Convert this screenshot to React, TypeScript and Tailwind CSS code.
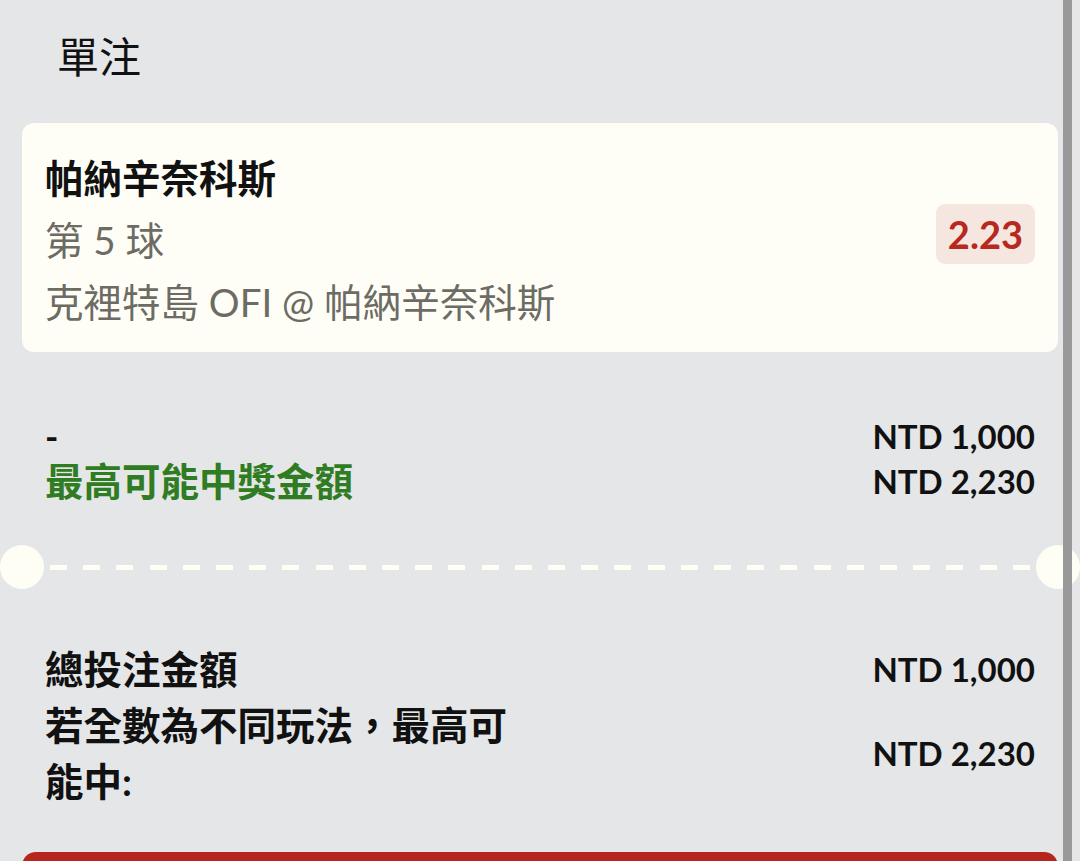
const font = "font-['Lato','Noto_Sans_CJK_TC',sans-serif]";

function Dashes() {
  const dashes = Array.from({ length: 30 }, (_, i) => i);
  return (
    <div className="flex h-[44px] w-full items-center">
      <div className="h-[44px] w-[44px] shrink-0 rounded-full bg-[#fffef5]" />
      <div className="flex flex-1 items-center justify-between px-[6px]">
        {dashes.map((i) => (
          <div key={i} className="h-[5px] w-[17px] bg-[#fffef5]" />
        ))}
      </div>
      <div className="h-[44px] w-[44px] shrink-0 rounded-full bg-[#fffef5]" />
    </div>
  );
}

export default function App() {
  return (
    <div className={`relative h-[861px] w-[1080px] overflow-hidden bg-[#e5e6e8] text-[#111] ${font}`}>
      {/* Header */}
      <div className="h-[123px] pl-[57px] pt-[27px] text-[42px] leading-[60px]">單注</div>

      {/* Selection card */}
      <div className="mx-[22px] flex items-center justify-between rounded-[12px] bg-[#fffef6] pb-[19px] pl-[23px] pr-[23px] pt-[24px]">
        <div className="text-[38.5px] leading-[62px]">
          <div className="font-bold text-[#111]">帕納辛奈科斯</div>
          <div className="text-[#6c6b64]">第 5 球</div>
          <div className="text-[#6c6b64]">克裡特島 OFI @ 帕納辛奈科斯</div>
        </div>
        <div className="mb-[12px] rounded-[9px] bg-[#f6e6e0] px-[12px] text-[38px] font-bold leading-[60px] text-[#b8281f]">
          2.23
        </div>
      </div>

      {/* Stake / potential win */}
      <div className="mx-[22px] mt-[62px] px-[23px] font-bold leading-[45px]">
        <div className="flex items-center justify-between">
          <span className="text-[36px]">-</span>
          <span className="text-[33px]">NTD 1,000</span>
        </div>
        <div className="flex items-center justify-between">
          <span className="text-[38.5px] text-[#2f7c22]">最高可能中獎金額</span>
          <span className="text-[33px]">NTD 2,230</span>
        </div>
      </div>

      {/* Ticket separator */}
      <div className="mt-[41px]">
        <Dashes />
      </div>

      {/* Totals */}
      <div className="mx-[22px] mt-[52px] px-[23px] font-bold">
        <div className="flex items-center justify-between leading-[56px]">
          <span className="text-[38.5px]">總投注金額</span>
          <span className="text-[33px]">NTD 1,000</span>
        </div>
        <div className="flex items-center justify-between leading-[56px]">
          <span className="w-[475px] text-[38.5px]">若全數為不同玩法，最高可能中:</span>
          <span className="text-[33px]">NTD 2,230</span>
        </div>
      </div>

      {/* Place bet button */}
      <div className="mx-[22px] mt-[43px] h-[80px] rounded-t-[14px] bg-[#b5261d]" />

      {/* Scrollbar */}
      <div className="absolute bottom-0 left-[1063px] top-0 w-[9px] bg-[#999999]" />
    </div>
  );
}
